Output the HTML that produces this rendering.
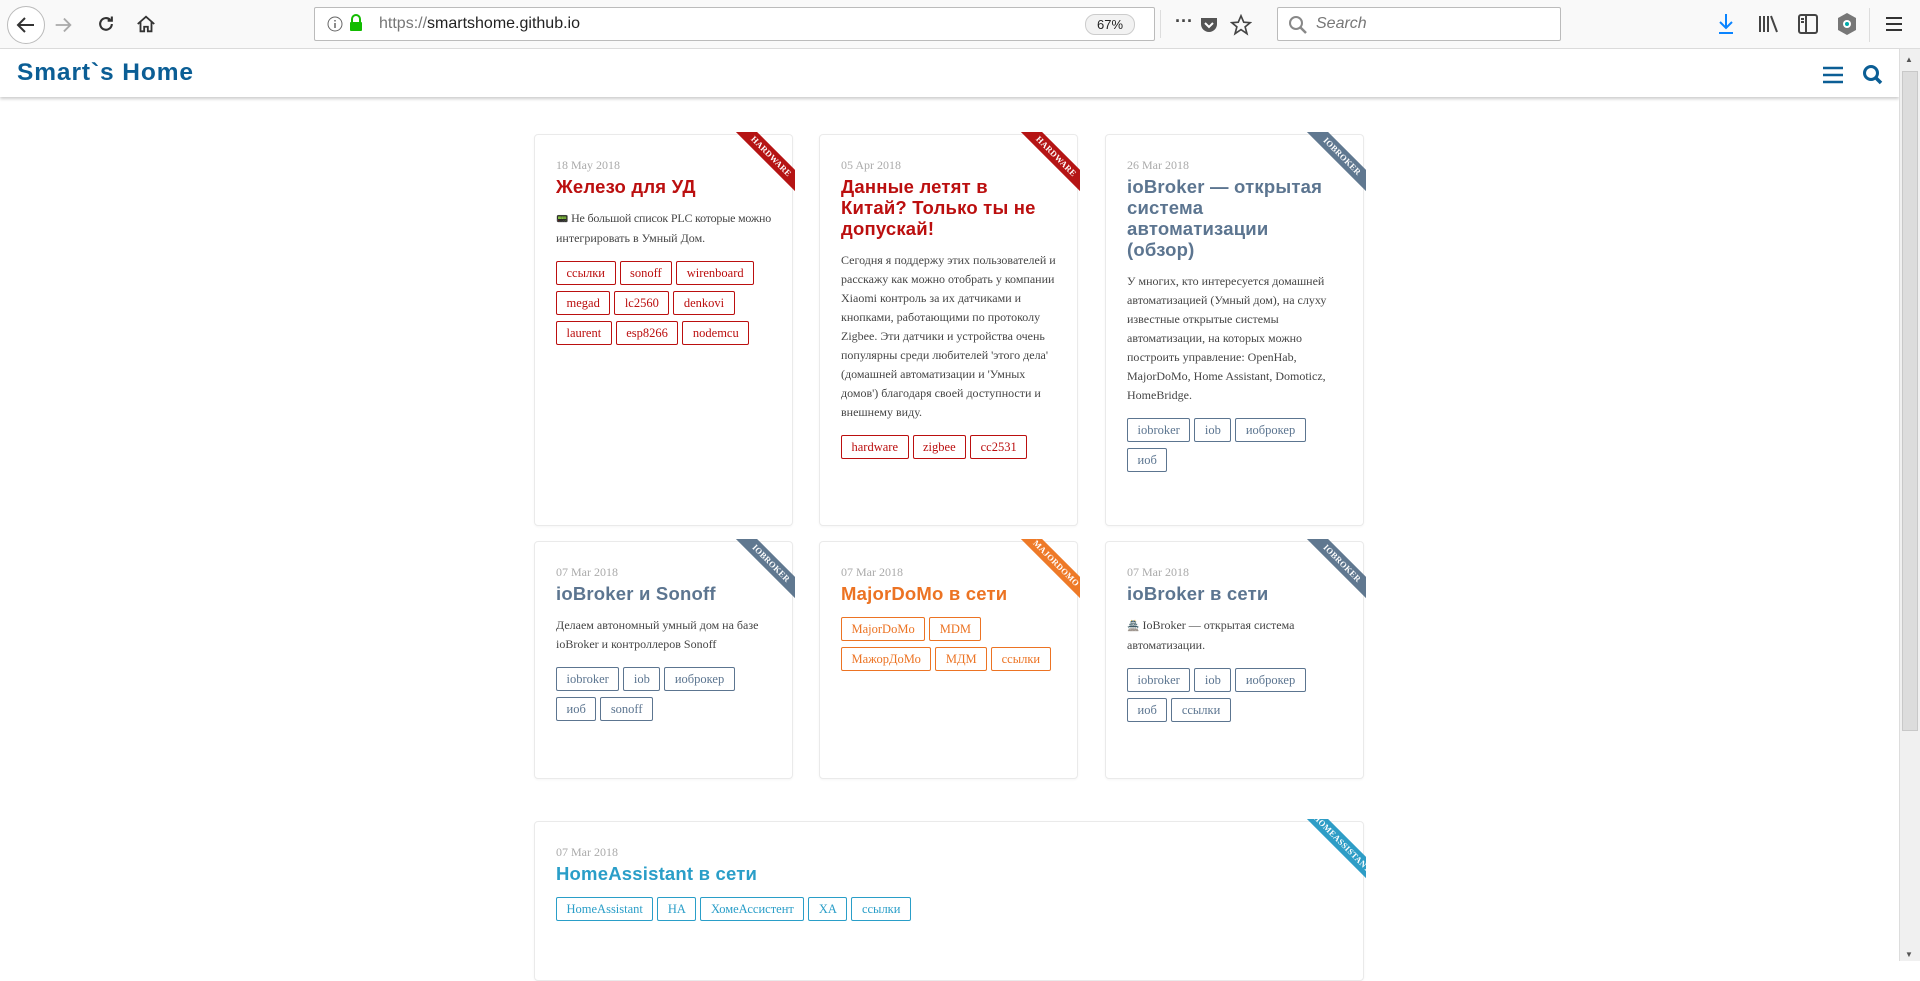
<!DOCTYPE html>
<html><head><meta charset="utf-8"><style>
*{box-sizing:border-box;margin:0;padding:0}
body{width:1920px;height:961px;overflow:hidden;background:#fff;font-family:"Liberation Sans",sans-serif;position:relative}
.chrome{position:absolute;left:0;top:0;width:1920px;height:49px;background:#f9f9f9;border-bottom:1px solid #ddd}
.url{position:absolute;left:314px;top:7px;width:841px;height:34px;background:#fff;border:1px solid #bbb;border-radius:2px}
.search{position:absolute;left:1277px;top:7px;width:284px;height:34px;background:#fff;border:1px solid #bbb;border-radius:2px}
.hdr{position:absolute;left:0;top:49px;width:1899px;height:48px;background:#fff;box-shadow:0 2px 3px rgba(0,0,0,.2)}
.logo{position:absolute;left:17px;top:10px;font-weight:bold;font-size:24.5px;letter-spacing:.9px;color:#0b5e95}
.sb{position:absolute;left:1899px;top:49px;width:21px;height:912px;background:#f0f0f0;border-left:1px solid #ddd}
.thumb{position:absolute;left:2px;top:22px;width:16px;height:660px;background:#dcdcdc;border:1px solid #c8c8c8}
.card{position:absolute;width:259px;border:1px solid #eaeaea;border-radius:4px;background:#fff;padding:22px 20px 0 21px;box-shadow:0 1px 2px rgba(0,0,0,.04)}
.date{font-family:"Liberation Serif",serif;font-size:12px;color:#aaa;line-height:16px}
.t{font-weight:bold;font-size:18.5px;line-height:21px;margin-top:3px;letter-spacing:.2px}
.p{font-family:"Liberation Serif",serif;font-size:12px;color:#444;line-height:19px;margin-top:12px}
.em{font-size:10px}
.tags{margin-top:13px;display:flex;flex-wrap:wrap;gap:6px 4px}
.tag{font-family:"Liberation Serif",serif;font-size:12.5px;height:24px;line-height:22px;padding:0 9.5px;border:1px solid;border-radius:2px}
.rib{position:absolute;top:-3px;right:-3px;width:62px;height:62px;overflow:hidden}
.rib span{position:absolute;top:17px;right:-26px;width:100px;height:15px;transform:rotate(45deg);color:#fff;font-family:"Liberation Serif",serif;font-weight:bold;font-size:8.5px;line-height:15px;text-align:center;letter-spacing:.3px}
.red{color:#bb0f0f}.red .tag{border-color:#bb0f0f;color:#bb0f0f}.red .rib span{background:#b51414}
.gr{color:#5c7590}.gr .tag{border-color:#5c7590;color:#5c7590}.gr .rib span{background:#607890}
.or{color:#ec7323}.or .tag{border-color:#ec7323;color:#ec7323}.or .rib span{background:#ee7a28}
.bl{color:#2a9ec8}.bl .tag{border-color:#2a9ec8;color:#2a9ec8}.bl .rib span{background:#2e9dc6}
</style></head><body>
<div class="chrome">
<div style="position:absolute;left:7px;top:6px;width:38px;height:38px;border:1px solid #bbb;border-radius:50%;background:#fff"></div>
<svg style="position:absolute;left:14px;top:13px" width="24" height="24" viewBox="0 0 24 24"><path d="M20 12H5M11 5l-7 7 7 7" stroke="#333" stroke-width="2" fill="none"/></svg>
<svg style="position:absolute;left:52px;top:14px" width="22" height="22" viewBox="0 0 24 24"><path d="M4 12h15M13 5l7 7-7 7" stroke="#aaa" stroke-width="2" fill="none"/></svg>
<svg style="position:absolute;left:96px;top:14px" width="20" height="20" viewBox="0 0 24 24"><path d="M19 12a7 7 0 1 1-2-5M19 3v5h-5" stroke="#333" stroke-width="2.5" fill="none"/></svg>
<svg style="position:absolute;left:135px;top:13px" width="22" height="22" viewBox="0 0 24 24"><path d="M3 12l9-8 9 8M6 10v10h4v-5h4v5h4V10" stroke="#333" stroke-width="2" fill="none"/></svg>
<div class="url">
<svg style="position:absolute;left:12px;top:8px" width="16" height="16"><circle cx="8" cy="8" r="7" stroke="#666" fill="none"/><path d="M8 7v5M8 4v1.5" stroke="#666" stroke-width="1.5"/></svg>
<svg style="position:absolute;left:34px;top:6px" width="14" height="18"><path d="M3 8V5a4 4 0 0 1 8 0v3" stroke="#12bc00" stroke-width="2" fill="none"/><rect x="1" y="8" width="12" height="9" rx="1" fill="#12bc00"/></svg>
<span style="position:absolute;left:64px;top:7px;font-size:16px;color:#222"><span style="color:#777">https://</span>smartshome.github.io</span>
<span style="position:absolute;left:770px;top:6px;width:50px;height:21px;border:1px solid #ccc;border-radius:10px;background:#f2f2f2;font-size:13px;text-align:center;line-height:19px;color:#222">67%</span>
<span style="position:absolute;left:845px;top:2px;width:1px;height:28px;background:#ddd"></span>
<span style="position:absolute;left:860px;top:3px;font-size:18px;color:#444;font-weight:bold">···</span>
<svg style="position:absolute;left:884px;top:7px" width="20" height="20"><path d="M2 3h16v6a8 8 0 0 1-16 0z" fill="#555"/><path d="M6 8l4 4 4-4" stroke="#fff" stroke-width="2" fill="none"/></svg>
<svg style="position:absolute;left:915px;top:6px" width="22" height="22" viewBox="0 0 24 24"><path d="M12 2l3 7 7 .5-5.5 4.5 2 7.5L12 17l-6.5 4.5 2-7.5L2 9.5 9 9z" stroke="#444" stroke-width="1.8" fill="none"/></svg>
</div>
<div class="search">
<svg style="position:absolute;left:10px;top:7px" width="20" height="20"><circle cx="8" cy="8" r="6" stroke="#888" stroke-width="2" fill="none"/><path d="M12 12l6 6" stroke="#888" stroke-width="2.5"/></svg>
<span style="position:absolute;left:38px;top:7px;font-style:italic;font-size:16px;color:#777">Search</span></div>
<svg style="position:absolute;left:1716px;top:12px" width="20" height="24"><path d="M10 2v14M4 10l6 6 6-6" stroke="#0a84ff" stroke-width="2" fill="none"/><path d="M3 21h14" stroke="#0a84ff" stroke-width="2"/></svg>
<svg style="position:absolute;left:1758px;top:14px" width="22" height="20"><path d="M2 2v16M6 2v16M10 2v16M13 2l6 16" stroke="#444" stroke-width="2"/></svg>
<svg style="position:absolute;left:1798px;top:14px" width="20" height="20"><rect x="1" y="1" width="18" height="18" rx="2" stroke="#444" stroke-width="2" fill="none"/><path d="M8 1v18M3 5h3M3 8h3" stroke="#444" stroke-width="2"/></svg>
<svg style="position:absolute;left:1837px;top:12px" width="20" height="24"><path d="M10 1l9 5v12l-9 5-9-5V6z" fill="#777"/><circle cx="10" cy="12" r="4" fill="#fff"/><circle cx="10" cy="12" r="2" fill="#0aa"/></svg>
<span style="position:absolute;left:1869px;top:8px;width:1px;height:34px;background:#ddd"></span>
<svg style="position:absolute;left:1885px;top:15px" width="18" height="18"><path d="M1 3h16M1 9h16M1 15h16" stroke="#333" stroke-width="2"/></svg>
</div>
<div class="hdr"><div class="logo">Smart`s Home</div>
<svg style="position:absolute;left:1822px;top:17px" width="22" height="18"><path d="M1 2h20M1 9h20M1 16h20" stroke="#0b5e95" stroke-width="2.4"/></svg>
<svg style="position:absolute;left:1862px;top:15px" width="22" height="22"><circle cx="9" cy="9" r="6.5" stroke="#0b5e95" stroke-width="3" fill="none"/><path d="M13 13l6 6" stroke="#0b5e95" stroke-width="3.5"/></svg>
</div>
<div class="sb"><div style="position:absolute;left:5px;top:6px;font-size:8px;color:#555">▲</div><div class="thumb"></div><div style="position:absolute;left:5px;bottom:2px;font-size:8px;color:#555">▼</div></div>

<div class="card red" style="left:534px;top:134px;height:392px"><div class="rib"><span>HARDWARE</span></div>
<div class="date">18 May 2018</div><div class="t">Железо для УД</div>
<div class="p"><span style="white-space:nowrap;letter-spacing:-.2px"><span class="em">📟</span> Не большой список PLC которые можно</span><br>интегрировать в Умный Дом.</div>
<div class="tags"><span class="tag">ссылки</span><span class="tag">sonoff</span><span class="tag">wirenboard</span><span class="tag">megad</span><span class="tag">lc2560</span><span class="tag">denkovi</span><span class="tag">laurent</span><span class="tag">esp8266</span><span class="tag">nodemcu</span></div></div>

<div class="card red" style="left:819px;top:134px;height:392px"><div class="rib"><span>HARDWARE</span></div>
<div class="date">05 Apr 2018</div><div class="t">Данные летят в<br>Китай? Только ты не допускай!</div>
<div class="p">Сегодня я поддержу этих пользователей и расскажу как можно отобрать у компании Xiaomi контроль за их датчиками и кнопками, работающими по протоколу Zigbee. Эти датчики и устройства очень популярны среди любителей 'этого дела' (домашней автоматизации и 'Умных домов') благодаря своей доступности и внешнему виду.</div>
<div class="tags"><span class="tag">hardware</span><span class="tag">zigbee</span><span class="tag">cc2531</span></div></div>

<div class="card gr" style="left:1105px;top:134px;height:392px"><div class="rib"><span>IOBROKER</span></div>
<div class="date">26 Mar 2018</div><div class="t">ioBroker — открытая<br>система<br>автоматизации<br>(обзор)</div>
<div class="p">У многих, кто интересуется домашней автоматизацией (Умный дом), на слуху известные открытые системы автоматизации, на которых можно построить управление: OpenHab, MajorDoMo, Home Assistant, Domoticz, HomeBridge.</div>
<div class="tags" style="width:185px"><span class="tag">iobroker</span><span class="tag">iob</span><span class="tag">иоброкер</span><span class="tag">иоб</span></div></div>

<div class="card gr" style="left:534px;top:541px;height:238px"><div class="rib"><span>IOBROKER</span></div>
<div class="date">07 Mar 2018</div><div class="t">ioBroker и Sonoff</div>
<div class="p">Делаем автономный умный дом на базе ioBroker и контроллеров Sonoff</div>
<div class="tags" style="width:185px"><span class="tag">iobroker</span><span class="tag">iob</span><span class="tag">иоброкер</span><span class="tag">иоб</span><span class="tag">sonoff</span></div></div>

<div class="card or" style="left:819px;top:541px;height:238px"><div class="rib"><span>MAJORDOMO</span></div>
<div class="date">07 Mar 2018</div><div class="t">MajorDoMo в сети</div>
<div class="tags" style="width:214px"><span class="tag">MajorDoMo</span><span class="tag">MDM</span><span class="tag">МажорДоМо</span><span class="tag">МДМ</span><span class="tag">ссылки</span></div></div>

<div class="card gr" style="left:1105px;top:541px;height:238px"><div class="rib"><span>IOBROKER</span></div>
<div class="date">07 Mar 2018</div><div class="t">ioBroker в сети</div>
<div class="p"><span class="em">🏯</span> IoBroker — открытая система автоматизации.</div>
<div class="tags" style="width:185px"><span class="tag">iobroker</span><span class="tag">iob</span><span class="tag">иоброкер</span><span class="tag">иоб</span><span class="tag">ссылки</span></div></div>

<div class="card bl" style="left:534px;top:821px;width:830px;height:160px"><div class="rib"><span>HOMEASSISTANT</span></div>
<div class="date">07 Mar 2018</div><div class="t">HomeAssistant в сети</div>
<div class="tags"><span class="tag">HomeAssistant</span><span class="tag">HA</span><span class="tag">ХомеАссистент</span><span class="tag">ХА</span><span class="tag">ссылки</span></div></div>
</body></html>
